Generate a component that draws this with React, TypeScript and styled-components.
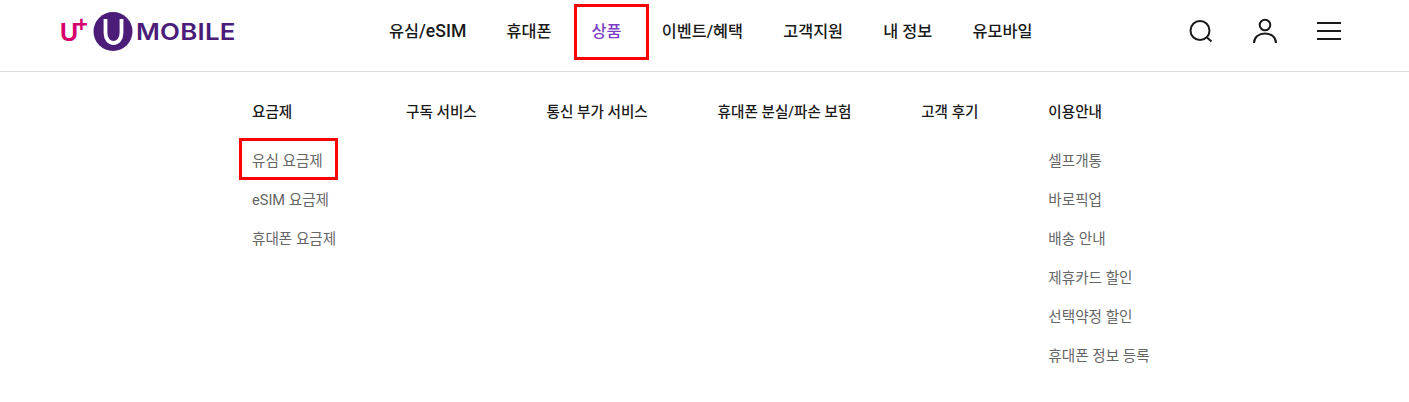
import styled, { createGlobalStyle } from "styled-components";

const GlobalStyle = createGlobalStyle`
html, body {
    margin: 0;
    padding: 0;
    background: #fff;
    font-family: Roboto, "Noto Sans CJK KR", sans-serif;
}
*{
    box-sizing: border-box;
}
ul{
    list-style: none;
    margin: 0;
    padding: 0;
}
`

const Page = styled.div`
width: 1409px;
height: 402px;
overflow: hidden;
`

const Header = styled.header`
height: 72px;
display: flex;
align-items: flex-start;
padding-left: 60px;
border-bottom: 1px solid #ddd;
`

const Logo = styled.a`
width: 176px;
height: 39px;
margin-top: 12px;
display: flex;
align-items: center;
`

const LogoU = styled.span`
font-family: "Liberation Sans", sans-serif;
font-size: 25px;
font-weight: 700;
line-height: 24px;
color: #d6006e;
position: relative;
width: 33px;
padding-top: 0;
`

const LogoPlus = styled.span`
position: absolute;
left: 15px;
top: -6px;
font-size: 22px;
line-height: 22px;
`

const LogoMobile = styled.span`
font-family: "Inter", sans-serif;
font-size: 22.5px;
font-weight: 600;
line-height: 39px;
letter-spacing: 0.2px;
color: #4b1d78;
margin-left: 3px;
transform: scaleX(1.15);
transform-origin: left center;
`

const Nav = styled.nav`
margin-left: 153px;
display: flex;
gap: 40.2px;
`

const NavItem = styled.a<{ $active?: boolean }>`
position: relative;
height: 63px;
line-height: 63px;
font-size: 16.3px;
font-weight: 500;
white-space: nowrap;
color: ${(props) => (props.$active ? "#7b3fc4" : "#1a1a1a")};
`

const NavLatin = styled.span`
font-size: 17.6px;
`

const NavBox = styled.span`
position: absolute;
left: -18px;
top: 4px;
width: 75px;
height: 56px;
border: 3px solid #f00;
`

const Icons = styled.div`
margin-left: auto;
margin-right: 64px;
display: flex;
gap: 32px;
padding-top: 15px;
`

const IconButton = styled.button`
width: 32px;
height: 32px;
padding: 0;
border: 0;
background: none;
display: block;
`

const Menu = styled.div`
display: flex;
gap: 69.8px;
padding: 30px 0 0 252px;
`

const Column = styled.div`
display: flex;
flex-direction: column;
`

const ColumnTitle = styled.h3`
margin: 0 0 20px;
height: 20px;
font-size: 14.6px;
line-height: 20px;
font-weight: 500;
color: #1a1a1a;
white-space: nowrap;
`

const MenuItem = styled.li`
position: relative;
height: 39px;
font-size: 14.6px;
line-height: 39px;
color: #666;
white-space: nowrap;
`

const MenuBox = styled.span`
position: absolute;
left: -13px;
top: -4px;
width: 99px;
height: 42px;
border: 3px solid #f00;
`

const navItems = ["휴대폰", "상품", "이벤트/혜택", "고객지원", "내 정보", "유모바일"];

const columns = [
    { title: "요금제", items: ["유심 요금제", "eSIM 요금제", "휴대폰 요금제"] },
    { title: "구독 서비스", items: [] },
    { title: "통신 부가 서비스", items: [] },
    { title: "휴대폰 분실/파손 보험", items: [] },
    { title: "고객 후기", items: [] },
    { title: "이용안내", items: ["셀프개통", "바로픽업", "배송 안내", "제휴카드 할인", "선택약정 할인", "휴대폰 정보 등록"] },
];

function App() {
    return <Page>
        <GlobalStyle />
        <Header>
            <Logo>
                <LogoU>U<LogoPlus>+</LogoPlus></LogoU>
                <svg width="40" height="39" viewBox="0 0 40 39">
                    <circle cx="20" cy="19.5" r="19.5" fill="#4b1d78" />
                    <path d="M12.5 7v14c0 6 3.500 10 8 10s8-4 8-10V7" fill="none" stroke="#fff" strokeWidth="3.8" />
                </svg>
                <LogoMobile>MOBILE</LogoMobile>
            </Logo>
            <Nav>
                <NavItem>유심<NavLatin>/eSIM</NavLatin></NavItem>
                {navItems.map(item =>
                    <NavItem key={item} $active={item === "상품"}>
                        {item}
                        {item === "상품" && <NavBox />}
                    </NavItem>)}
            </Nav>
            <Icons>
                <IconButton>
                    <svg width="32" height="32" viewBox="0 0 32 32" fill="none" stroke="#1a1a1a" strokeWidth="2">
                        <circle cx="15" cy="15.500" r="9.500" />
                        <path d="M22 22.500l4.500 4" />
                    </svg>
                </IconButton>
                <IconButton>
                    <svg width="32" height="32" viewBox="0 0 32 32" fill="none" stroke="#1a1a1a" strokeWidth="2">
                        <circle cx="16" cy="10" r="5.300" />
                        <path d="M5 28c0-6 5-9.500 11-9.500s11 3.500 11 9.500" />
                    </svg>
                </IconButton>
                <IconButton>
                    <svg width="32" height="32" viewBox="0 0 32 32" fill="none" stroke="#1a1a1a" strokeWidth="2">
                        <path d="M4 8h24M4 16h24M4 24h24" />
                    </svg>
                </IconButton>
            </Icons>
        </Header>
        <Menu>
            {columns.map(column =>
                <Column key={column.title}>
                    <ColumnTitle>{column.title}</ColumnTitle>
                    <ul>
                        {column.items.map(item =>
                            <MenuItem key={item}>
                                {item}
                                {item === "유심 요금제" && <MenuBox />}
                            </MenuItem>)}
                    </ul>
                </Column>)}
        </Menu>
    </Page>
}

export default App;
